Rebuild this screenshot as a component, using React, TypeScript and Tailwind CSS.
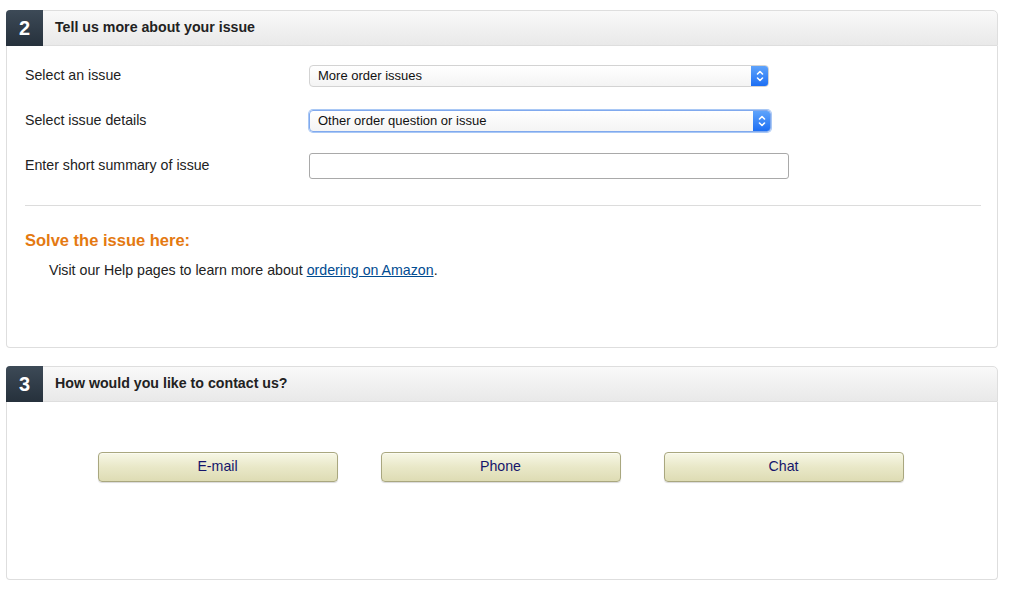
import React from "react";

function Chevrons() {
  return (
    <svg width="10" height="14" viewBox="0 0 10 14" fill="none" stroke="white" strokeWidth="1.6" strokeLinecap="round" strokeLinejoin="round">
      <path d="M2.5 5 L5 2.5 L7.5 5" />
      <path d="M2.5 9 L5 11.5 L7.5 9" />
    </svg>
  );
}

function Select({ value, focused }: { value: string; focused?: boolean }) {
  return (
    <div
      className={`flex h-[22px] items-stretch rounded-[4px] bg-gradient-to-b from-white to-[#f4f4f4] ${
        focused
          ? "w-[462px] border border-[#80a9ee] shadow-[0_0_0_1px_#a9c8f5]"
          : "w-[460px] border border-[#d3d3d3]"
      }`}
    >
      <div className="flex flex-1 items-center pl-[8px] text-[13px] text-[#111]">{value}</div>
      <div className="flex w-[17px] items-center justify-center rounded-r-[3px] bg-gradient-to-b from-[#5ea3fb] to-[#1c6ef3]">
        <Chevrons />
      </div>
    </div>
  );
}

function Header({ n, title }: { n: string; title: string }) {
  return (
    <div className="flex h-[36px] items-stretch rounded-t-[4px] rounded-tr-[5px] border border-[#dedede] bg-gradient-to-b from-[#f9f9f9] to-[#e9e9e9]">
      <div className="-my-px -ml-px flex w-[37px] items-center justify-center rounded-tl-[4px] bg-gradient-to-b from-[#3d4a57] to-[#26313c] text-[20px] font-bold text-white">
        {n}
      </div>
      <div className="flex items-center pl-[12px] text-[14.2px] font-bold text-[#222]">{title}</div>
    </div>
  );
}

function Btn({ label }: { label: string }) {
  return (
    <div className="flex h-[30px] w-[240px] items-center justify-center rounded-[4px] border border-[#a9a77f] bg-gradient-to-b from-[#f7f7e6] via-[#e9e8c8] to-[#dedcb4] text-[14.2px] text-[#15156b] shadow-[inset_0_1px_0_#fbfbf0,0_1px_1px_rgba(0,0,0,0.15)]">
      {label}
    </div>
  );
}

export default function App() {
  return (
    <div
      className="min-h-[595px] bg-white pl-[6px] pr-[26px] pt-[10px]"
      style={{ fontFamily: '"Liberation Sans", Arial, sans-serif' }}
    >
      <div>
        <Header n="2" title="Tell us more about your issue" />
        <div className="h-[302px] rounded-b-[4px] border border-t-0 border-[#dedede] px-[18px] pt-[7px]">
          <div className="flex h-[45px] items-center">
            <div className="w-[284px] pt-[1px] text-[14.2px] text-[#222]">Select an issue</div>
            <Select value="More order issues" />
          </div>
          <div className="flex h-[45px] items-center">
            <div className="w-[284px] pt-[1px] text-[14.2px] text-[#222]">Select issue details</div>
            <Select value="Other order question or issue" focused />
          </div>
          <div className="flex h-[45px] items-center">
            <div className="w-[284px] pt-[1px] text-[14.2px] text-[#222]">Enter short summary of issue</div>
            <div className="h-[26px] w-[480px] rounded-[3px] border border-[#a9a9a9] bg-white" />
          </div>
          <div className="mr-[-2px] mt-[17px] border-t border-[#dcdcdc]" />
          <div className="mt-[22px] text-[16.5px] font-bold text-[#e47911]">Solve the issue here:</div>
          <div className="mt-[7px] pl-[24px] text-[14.2px] text-[#222]">
            Visit our Help pages to learn more about{" "}
            <a href="#" className="text-[#004b91] underline">
              ordering on Amazon
            </a>
            .
          </div>
        </div>
      </div>

      <div className="mt-[18px]">
        <Header n="3" title="How would you like to contact us?" />
        <div className="flex h-[178px] justify-center gap-[43px] rounded-b-[4px] border border-t-0 border-[#dedede] pr-[3px] pt-[50px]">
          <Btn label="E-mail" />
          <Btn label="Phone" />
          <Btn label="Chat" />
        </div>
      </div>
    </div>
  );
}
